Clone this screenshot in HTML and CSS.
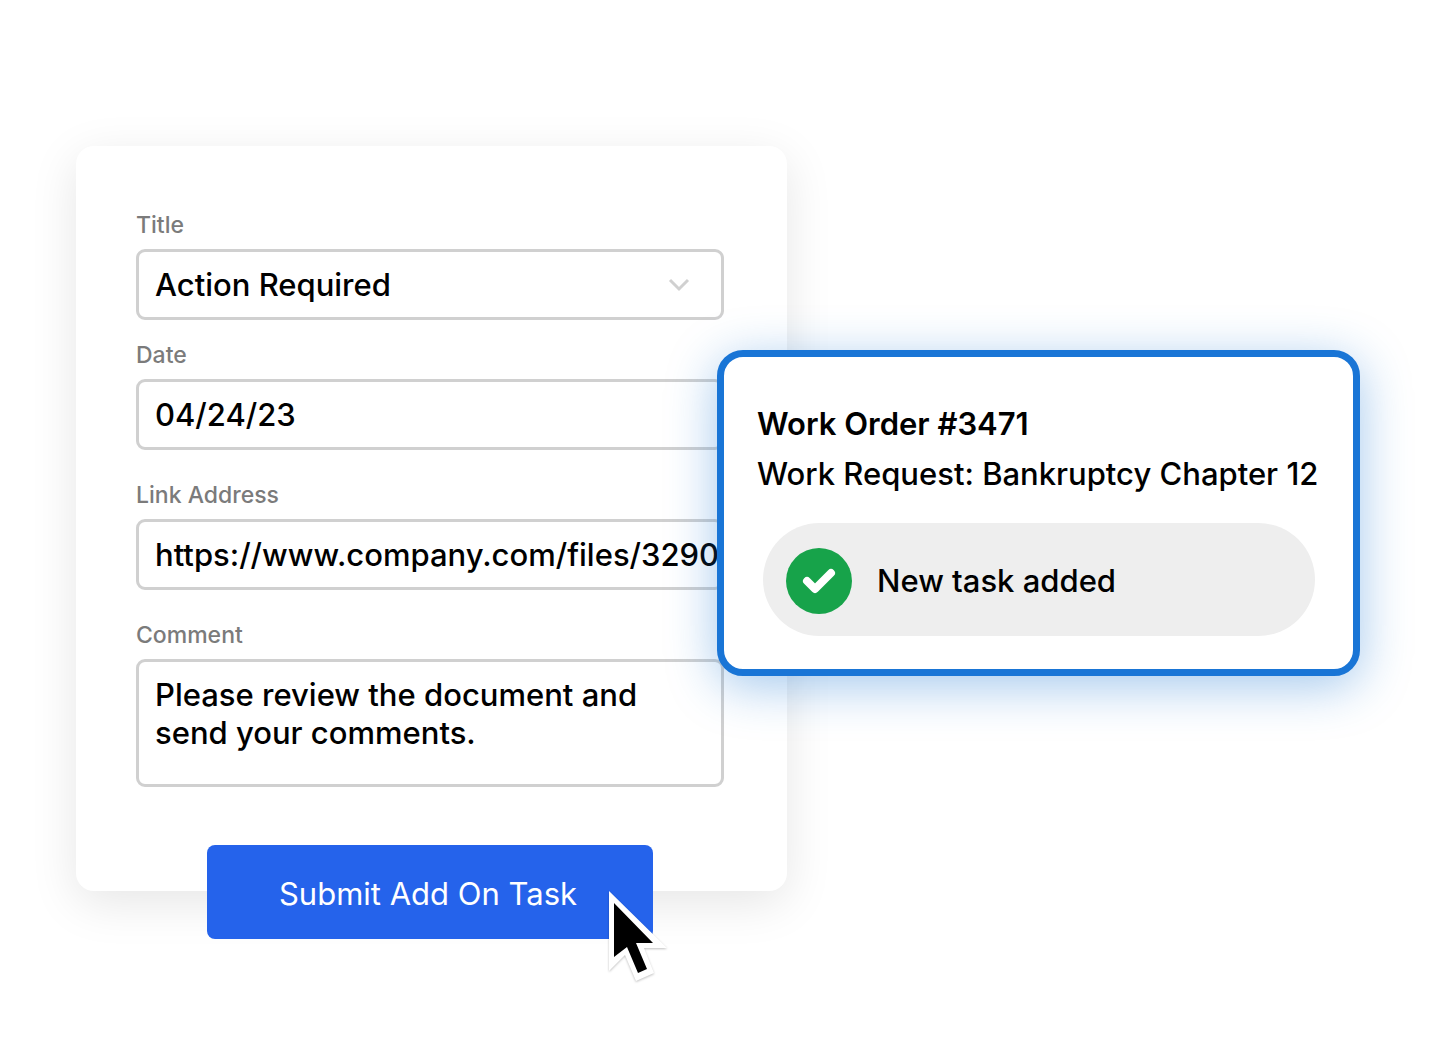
FILE: index.html
```
<!DOCTYPE html>
<html lang="en">
<head>
    <meta charset="UTF-8">
    <meta name="viewport" content="width=device-width, initial-scale=1.0">
    <title>Add On Task</title>
    <link rel="stylesheet" href="styles.css">
</head>
<body>
    <main class="scene">
        <form class="task-form">
            <div class="field">
                <label for="title">Title</label>
                <div class="select-wrap">
                    <select id="title" name="title">
                        <option>Action Required</option>
                    </select>
                    <svg class="chevron" viewBox="0 0 22 14" aria-hidden="true">
                        <path d="M2 2 L11 11 L20 2"/>
                    </svg>
                </div>
            </div>

            <div class="field">
                <label for="date">Date</label>
                <input type="text" id="date" name="date" value="04/24/23">
            </div>

            <div class="field field-spaced">
                <label for="link">Link Address</label>
                <input type="text" id="link" name="link" value="https://www.company.com/files/3290">
            </div>

            <div class="field field-spaced">
                <label for="comment">Comment</label>
                <textarea id="comment" name="comment">Please review the document and send your comments.</textarea>
            </div>

            <div class="actions">
                <button type="button">Submit Add On Task</button>
                <svg class="cursor" viewBox="0 0 66 100" aria-hidden="true">
                    <path class="cursor-edge" d="M4 4 L62 61 L39 61 L49 86 L31 94 L20 68 L4 84 Z"/>
                    <path d="M9 16 L48 56 L31 56 L42 82 L33 86 L22 60 L9 70 Z"/>
                </svg>
            </div>
        </form>

        <section class="notice">
            <h1>Work Order #3471</h1>
            <p>Work Request: Bankruptcy Chapter 12</p>
            <div class="status">
                <svg class="check" viewBox="0 0 66 66" aria-hidden="true">
                    <circle cx="33" cy="33" r="33"/>
                    <path d="M21 33 L29 41 L45 25"/>
                </svg>
                <span>New task added</span>
            </div>
        </section>
    </main>
</body>
</html>
```
FILE: styles.css
```
:root {
    --primary-color: #2563eb;
    --notice-color: #1975d6;
    --success-color: #17a34a;
    --label-color: #7b7b7b;
    --border-color: #d0d0d0;
}

* {
    box-sizing: border-box;
}

body {
    font-family: Inter, "Liberation Sans", sans-serif;
    font-size: 31px;
    font-weight: 500;
    line-height: 38px;
    background-color: white;
    color: black;
    margin: 0;
}

.scene {
    display: flex;
    align-items: flex-start;
    min-height: 100vh;
    padding: 146px 88px 120px 76px;
}

.task-form {
    flex: 1 1 711px;
    min-width: 0;
    padding: 64px 63px 0 60px;
    border-radius: 18px;
    background: white;
    box-shadow: 0 12px 48px rgba(0, 0, 0, 0.1);
}

.field + .field {
    margin-top: 20px;
}

.field + .field-spaced {
    margin-top: 30px;
}

label {
    display: block;
    margin-bottom: 9px;
    font-size: 23px;
    line-height: 30px;
    color: var(--label-color);
}

input, select, textarea {
    display: block;
    width: 100%;
    height: 71px;
    padding: 0 0 0 16px;
    border: 3px solid var(--border-color);
    border-radius: 9px;
    background: white;
    color: inherit;
    font: inherit;
    outline: none;
}

select {
    appearance: none;
}

textarea {
    height: 128px;
    padding: 14px 16px;
    resize: none;
    overflow: hidden;
}

.select-wrap {
    position: relative;
}

.chevron {
    position: absolute;
    top: 29px;
    right: 34px;
    width: 22px;
    height: 14px;
    fill: none;
    stroke: var(--border-color);
    stroke-width: 3;
    pointer-events: none;
}

/* the button hangs over the bottom edge of the form */
.actions {
    position: relative;
    width: 446px;
    max-width: 100%;
    margin: 58px auto -48px;
}

button {
    display: block;
    width: 100%;
    height: 94px;
    padding: 4px 4px 0 0;
    border: none;
    border-radius: 8px;
    background-color: var(--primary-color);
    color: white;
    font: inherit;
    font-weight: 400;
    cursor: pointer;
}

.cursor {
    position: absolute;
    top: 42px;
    right: -18px;
    width: 66px;
    height: 100px;
    pointer-events: none;
}

.cursor-edge {
    fill: white;
    filter: drop-shadow(0 1px 1px rgba(0, 0, 0, 0.25));
}

.notice {
    position: relative;
    flex: 1 1 643px;
    min-width: 0;
    margin: 204px 0 0 -70px;
    padding: 42px 32px 33px 33px;
    border: 7px solid var(--notice-color);
    border-radius: 26px;
    background: white;
    box-shadow: 0 10px 50px rgba(25, 117, 210, 0.4);
}

h1, p {
    margin: 0;
    font-size: 31px;
    line-height: 50px;
}

h1 {
    font-weight: 600;
}

.status {
    display: flex;
    align-items: center;
    gap: 25px;
    height: 113px;
    margin: 24px 6px 0;
    padding: 2px 23px 0;
    border-radius: 57px;
    background: #eeeeee;
}

.check {
    flex: none;
    width: 66px;
    height: 66px;
    fill: var(--success-color);
}

.check path {
    fill: none;
    stroke: white;
    stroke-width: 8;
    stroke-linecap: round;
    stroke-linejoin: round;
}
```
